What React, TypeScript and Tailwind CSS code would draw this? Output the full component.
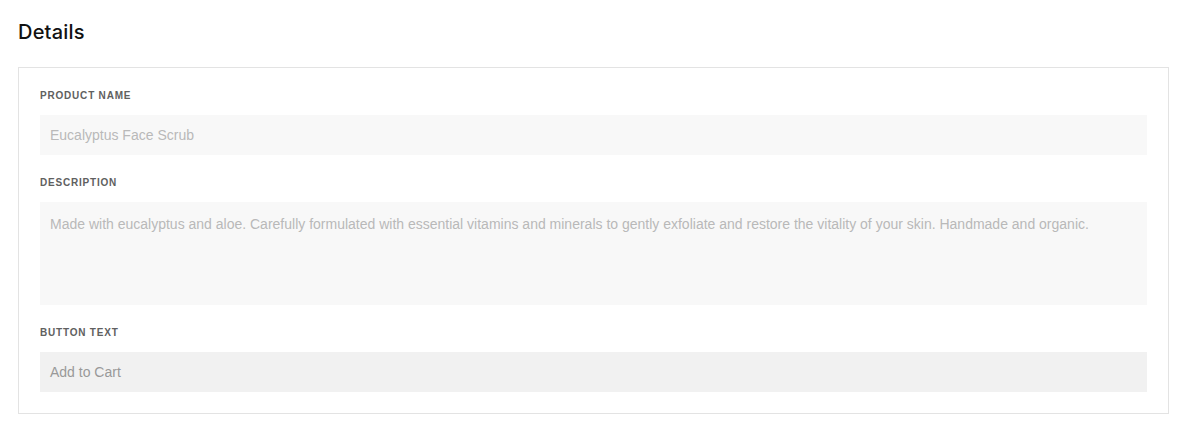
const fields = [
  { label: 'PRODUCT NAME', value: 'Eucalyptus Face Scrub', kind: 'input' },
  {
    label: 'DESCRIPTION',
    value:
      'Made with eucalyptus and aloe. Carefully formulated with essential vitamins and minerals to gently exfoliate and restore the vitality of your skin. Handmade and organic.',
    kind: 'textarea',
  },
  { label: 'BUTTON TEXT', value: 'Add to Cart', kind: 'button' },
];

const App = () => {
  return (
    <div className="min-h-screen bg-white px-[18px] pt-[20px] font-['Liberation_Sans',sans-serif]">
      <h2 className="font-['Inter',sans-serif] text-[20px] leading-[24px] font-medium tracking-[0.01em] text-[#111]">
        Details
      </h2>

      <div className="mt-[23px] w-[1151px] border border-[#e3e3e3] px-[21px] pt-[19px] pb-[21px] flex flex-col">
        {fields.map((field, i) => (
          <div key={field.label} className={i > 0 ? 'mt-[19px]' : ''}>
            <div className="pt-[1px] text-[10px] leading-[15px] font-bold tracking-[0.08em] text-[#606060]">
              {field.label}
            </div>
            {field.kind === 'textarea' ? (
              <div className="mt-[12px] h-[103px] bg-[#f8f8f8] px-[10px] pt-[12px] text-[14px] leading-[20px] text-[#b9b9b9]">
                {field.value}
              </div>
            ) : (
              <div
                className={
                  field.kind === 'button'
                    ? 'mt-[12px] h-[40px] bg-[#f1f1f1] px-[10px] flex items-center text-[14px] text-[#999]'
                    : 'mt-[12px] h-[40px] bg-[#f8f8f8] px-[10px] flex items-center text-[14px] text-[#b9b9b9]'
                }
              >
                {field.value}
              </div>
            )}
          </div>
        ))}
      </div>
    </div>
  );
};

export default App;
